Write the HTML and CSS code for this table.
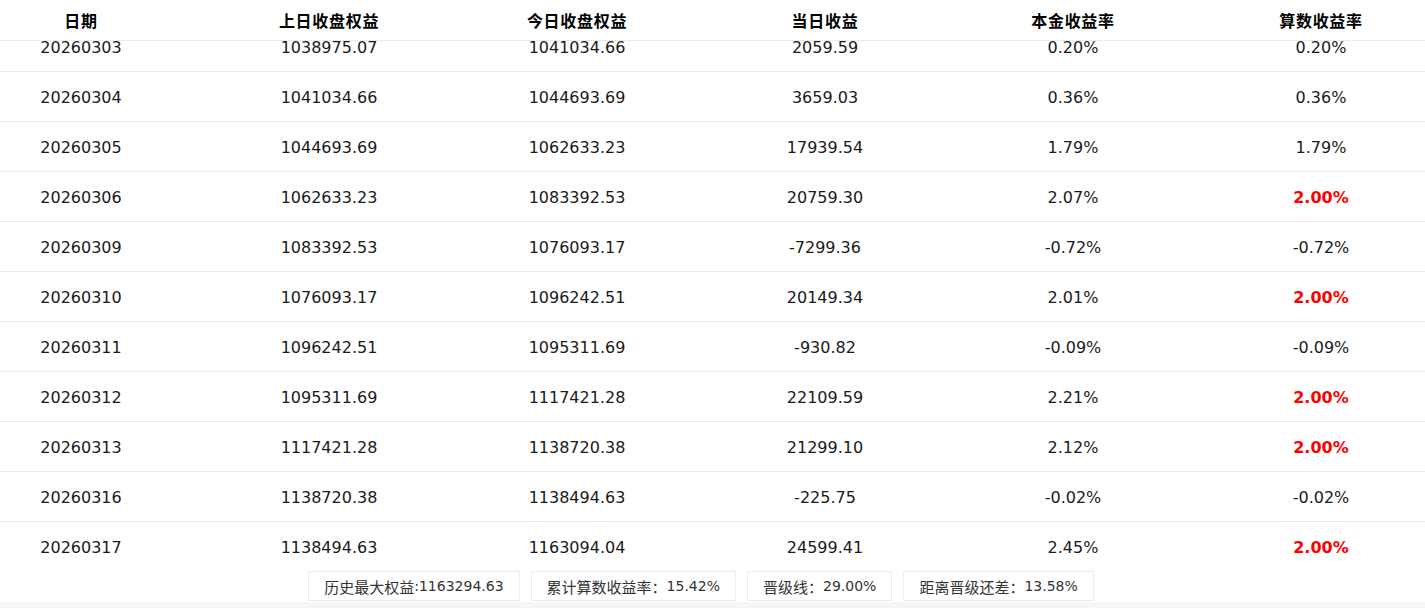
FILE: index.html
```html
<!DOCTYPE html>
<html lang="zh-CN">
<head>
<meta charset="utf-8">
<title>收益表</title>
<link rel="stylesheet" href="styles.css">
</head>
<body>
<div class="panel">
  <div class="row head">
    <div class="cell">日期</div>
    <div class="cell">上日收盘权益</div>
    <div class="cell">今日收盘权益</div>
    <div class="cell">当日收益</div>
    <div class="cell">本金收益率</div>
    <div class="cell">算数收益率</div>
  </div>
  <div class="scroll">
    <div class="rows">
      <div class="row"><div class="cell">20260303</div><div class="cell">1038975.07</div><div class="cell">1041034.66</div><div class="cell">2059.59</div><div class="cell">0.20%</div><div class="cell">0.20%</div></div>
      <div class="row"><div class="cell">20260304</div><div class="cell">1041034.66</div><div class="cell">1044693.69</div><div class="cell">3659.03</div><div class="cell">0.36%</div><div class="cell">0.36%</div></div>
      <div class="row"><div class="cell">20260305</div><div class="cell">1044693.69</div><div class="cell">1062633.23</div><div class="cell">17939.54</div><div class="cell">1.79%</div><div class="cell">1.79%</div></div>
      <div class="row"><div class="cell">20260306</div><div class="cell">1062633.23</div><div class="cell">1083392.53</div><div class="cell">20759.30</div><div class="cell">2.07%</div><div class="cell cap">2.00%</div></div>
      <div class="row"><div class="cell">20260309</div><div class="cell">1083392.53</div><div class="cell">1076093.17</div><div class="cell">-7299.36</div><div class="cell">-0.72%</div><div class="cell">-0.72%</div></div>
      <div class="row"><div class="cell">20260310</div><div class="cell">1076093.17</div><div class="cell">1096242.51</div><div class="cell">20149.34</div><div class="cell">2.01%</div><div class="cell cap">2.00%</div></div>
      <div class="row"><div class="cell">20260311</div><div class="cell">1096242.51</div><div class="cell">1095311.69</div><div class="cell">-930.82</div><div class="cell">-0.09%</div><div class="cell">-0.09%</div></div>
      <div class="row"><div class="cell">20260312</div><div class="cell">1095311.69</div><div class="cell">1117421.28</div><div class="cell">22109.59</div><div class="cell">2.21%</div><div class="cell cap">2.00%</div></div>
      <div class="row"><div class="cell">20260313</div><div class="cell">1117421.28</div><div class="cell">1138720.38</div><div class="cell">21299.10</div><div class="cell">2.12%</div><div class="cell cap">2.00%</div></div>
      <div class="row"><div class="cell">20260316</div><div class="cell">1138720.38</div><div class="cell">1138494.63</div><div class="cell">-225.75</div><div class="cell">-0.02%</div><div class="cell">-0.02%</div></div>
      <div class="row last"><div class="cell">20260317</div><div class="cell">1138494.63</div><div class="cell">1163094.04</div><div class="cell">24599.41</div><div class="cell">2.45%</div><div class="cell cap">2.00%</div></div>
    </div>
  </div>
  <div class="summary">
    <div class="stat"><span class="label">历史最大权益</span>:1163294.63</div>
    <div class="stat"><span class="label">累计算数收益率：</span>15.42%</div>
    <div class="stat"><span class="label">晋级线：</span>29.00%</div>
    <div class="stat"><span class="label">距离晋级还差：</span>13.58%</div>
  </div>
</div>
</body>
</html>
```

FILE: styles.css
```css
html, body {
  margin: 0;
  padding: 0;
}
body {
  background: #f6f6f6;
  font-family: "DejaVu Sans", "Noto Sans CJK SC", sans-serif;
  color: #1a1a1a;
  width: 1425px;
  height: 608px;
  overflow: hidden;
}
.panel {
  background: #fff;
  width: 1425px;
  height: 602px;
  display: flex;
  flex-direction: column;
}
.row {
  display: grid;
  grid-template-columns: repeat(6, 162px);
  column-gap: 86px;
  height: 49px;
  border-bottom: 1px solid #ebebeb;
  align-items: center;
  font-size: 16px;
}
.rows .cell {
  padding-top: 2px;
  line-height: 18px;
}
.row.last {
  border-bottom: none;
  height: 50px;
}
.cell {
  text-align: center;
  white-space: nowrap;
}
.head {
  height: 40px;
  font-weight: bold;
  color: #000;
  font-family: "Noto Sans CJK SC", sans-serif;
  font-size: 16px;
  letter-spacing: 0.7px;
}
.scroll {
  height: 530px;
  overflow: hidden;
}
.rows {
  margin-top: -19px;
}
.cap {
  color: #ff0000;
  font-weight: bold;
}
.summary {
  width: 1402px;
  display: flex;
  justify-content: center;
  gap: 11px;
}
.stat {
  height: 28px;
  border: 1px solid #ececec;
  padding: 0 15px;
  display: flex;
  align-items: center;
  font-size: 14px;
  color: #333;
  white-space: nowrap;
}
.label {
  font-family: "Noto Sans CJK SC", sans-serif;
  font-size: 15px;
}
```
